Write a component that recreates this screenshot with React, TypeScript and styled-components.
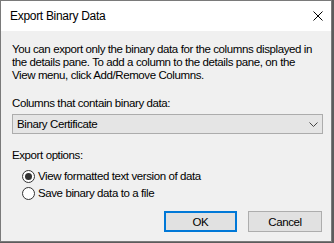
import React from 'react'
import styled, {createGlobalStyle} from 'styled-components'

const GlobalStyle = createGlobalStyle`
	html, body {
		margin: 0;
		padding: 0;
		background: #5c5c5c;
	}
	body {
		font-family: 'Liberation Sans', Arial, sans-serif;
		font-size: 11.5px;
		letter-spacing: -0.4px;
		color: #000;
	}
`

const App = () => {
	return (
		<>
			<GlobalStyle />
			<Dialog>
				<TitleBar>
					<Title>Export Binary Data</Title>
					<CloseButton aria-label="Close">
						<svg width="10" height="10" viewBox="0 0 10 10">
							<path d="M0.5 0.5 L9.5 9.5 M9.5 0.5 L0.5 9.5" stroke="#000" strokeWidth="1" />
						</svg>
					</CloseButton>
				</TitleBar>
				<Body>
					<Intro>
						You can export only the binary data for the columns displayed in
						<br />
						the details pane. To add a column to the details pane, on the
						<br />
						View menu, click Add/Remove Columns.
					</Intro>
					<Label>Columns that contain binary data:</Label>
					<Combo>
						<span>Binary Certificate</span>
						<svg width="9" height="5" viewBox="0 0 9 5">
							<path d="M0.5 0.5 L4.5 4.5 L8.5 0.5" stroke="#444" strokeWidth="1" fill="none" />
						</svg>
					</Combo>
					<Label spaced>Export options:</Label>
					<Options>
						<RadioRow>
							<Radio checked />
							<span>View formatted text version of data</span>
						</RadioRow>
						<RadioRow>
							<Radio />
							<span>Save binary data to a file</span>
						</RadioRow>
					</Options>
					<Buttons>
						<Button primary>OK</Button>
						<Button wide>Cancel</Button>
					</Buttons>
				</Body>
			</Dialog>
		</>
	)
}

export default App

const Dialog = styled.div`
	width: 330px;
	height: 240px;
	border: 1px solid #7a7a7a;
	background: #f0f0f0;
	display: flex;
	flex-direction: column;
`

const TitleBar = styled.div`
	height: 30px;
	flex-shrink: 0;
	background: #fff;
	display: flex;
	align-items: center;
	justify-content: space-between;
	padding: 0 8px 0 9px;
`

const Title = styled.span`
	font-size: 12px;
	letter-spacing: -0.3px;
`

const CloseButton = styled.div`
	width: 10px;
	height: 10px;
	display: flex;
`

const Body = styled.div`
	flex: 1;
	padding: 12px 8px 0 11px;
	display: flex;
	flex-direction: column;
`

const Intro = styled.p`
	margin: 0;
	line-height: 13px;
	white-space: nowrap;
`

const Label = styled.div<{spaced?: boolean}>`
	margin-top: ${(p) => (p.spaced ? '14px' : '14px')};
	line-height: 15px;
`

const Combo = styled.div`
	margin-top: 3px;
	height: 20px;
	box-sizing: border-box;
	border: 1px solid #acacac;
	background: #e5e5e5;
	display: flex;
	align-items: center;
	justify-content: space-between;
	padding: 0 4px 0 4px;
`

const Options = styled.div`
	display: flex;
	flex-direction: column;
	gap: 3px;
	margin-top: 6px;
	padding-left: 10px;
`

const RadioRow = styled.div`
	display: flex;
	align-items: center;
	gap: 3px;
	height: 14px;
`

const Radio = styled.span<{checked?: boolean}>`
	width: 11px;
	height: 11px;
	border: 1px solid #333;
	border-radius: 50%;
	background: #fff;
	display: flex;
	align-items: center;
	justify-content: center;

	&::after {
		content: '';
		width: 7px;
		height: 7px;
		border-radius: 50%;
		background: ${(p) => (p.checked ? '#333' : 'transparent')};
	}
`

const Buttons = styled.div`
	display: flex;
	justify-content: flex-end;
	gap: 11px;
	margin-top: 11px;
	padding-right: 1px;
`

const Button = styled.div<{primary?: boolean; wide?: boolean}>`
	width: ${(p) => (p.wide ? '74px' : '73px')};
	height: 21px;
	box-sizing: border-box;
	display: flex;
	align-items: center;
	justify-content: center;
	background: #e1e1e1;
	border: ${(p) => (p.primary ? '2px solid #0078d7' : '1px solid #adadad')};
`
